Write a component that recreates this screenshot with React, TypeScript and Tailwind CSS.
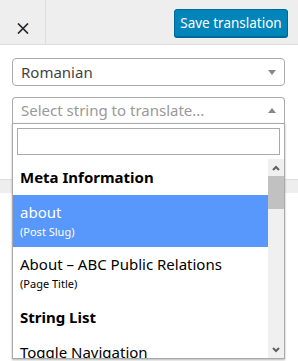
import { useState } from "react";

type Option = { label: string; hint?: string };
type Group = { title: string; options: Option[] };

const groups: Group[] = [
  {
    title: "Meta Information",
    options: [
      { label: "about", hint: "(Post Slug)" },
      { label: "About – ABC Public Relations", hint: "(Page Title)" },
    ],
  },
  {
    title: "String List",
    options: [{ label: "Toggle Navigation" }],
  },
];

function Triangle({ up }: { up?: boolean }) {
  return (
    <svg width="8" height="5" viewBox="0 0 8 5" className="text-[#888]">
      <path d={up ? "M0 5 L4 0 L8 5 Z" : "M0 0 L8 0 L4 5 Z"} fill="currentColor" />
    </svg>
  );
}

function Chevron({ up }: { up?: boolean }) {
  return (
    <svg width="8" height="6" viewBox="0 0 8 6" className="text-[#606060]">
      <path
        d={up ? "M1 5 L4 2 L7 5" : "M1 1 L4 4 L7 1"}
        fill="none"
        stroke="currentColor"
        strokeWidth="2"
      />
    </svg>
  );
}

export default function App() {
  const [selected] = useState("about");

  return (
    <div
      className="relative h-[361px] w-[298px] overflow-hidden bg-white text-[#32373c]"
      style={{ fontFamily: '"Noto Sans", "Open Sans", sans-serif' }}
    >
      {/* Header */}
      <div className="flex h-[45px] items-start border-b border-[#dddddd] bg-[#eeeeee]">
        <button className="flex h-[44px] w-[46px] items-end justify-center border-r border-[#dddddd] pb-[10px]">
          <svg width="12" height="11" viewBox="0 0 12 11">
            <path d="M1 0.5 L11 10.5 M11 0.5 L1 10.5" stroke="#23282d" strokeWidth="1.7" />
          </svg>
        </button>
        <div className="flex-1" />
        <button className="mr-[10px] mt-[9px] h-[28px] w-[114px] rounded-[3px] border border-[#006799] bg-[#0085ba] text-[13.5px] text-white shadow-[0_1px_0_#006799]">
          Save translation
        </button>
      </div>

      {/* Selects */}
      <div className="flex flex-col gap-[11px] px-[12px] pt-[13px] pr-[13px]">
        <div className="flex h-[28px] items-center justify-between rounded-[4px] border border-[#aaaaaa] pl-[8px] pr-[8px] text-[15px] text-[#444]">
          <span>Romanian</span>
          <Triangle />
        </div>
        <div className="flex h-[26px] items-center justify-between rounded-t-[4px] border border-b-0 border-[#aaaaaa] pl-[8px] pr-[8px] text-[15px] text-[#999]">
          <span>Select string to translate...</span>
          <Triangle up />
        </div>
      </div>

      {/* Background tab strip */}
      <div className="mt-[56px] h-[14px] border-t border-[#dddddd] bg-[#eeeeee]" />

      {/* Dropdown */}
      <div className="absolute left-[12px] top-[123px] flex h-[236px] w-[273px] flex-col border border-[#aaaaaa] bg-white shadow-[0_1px_2px_rgba(0,0,0,0.3)]">
        <div className="px-[4px] pb-[4px] pt-[4px]">
          <div className="h-[27px] w-full border border-[#aaaaaa]" />
        </div>
        <div className="flex min-h-0 flex-1">
          <ul className="flex-1 overflow-hidden">
            {groups.map((g) => (
              <li key={g.title}>
                <div className="px-[7px] py-[6px] text-[15px] font-bold leading-[24px] text-black">
                  {g.title}
                </div>
                {g.options.map((o) => {
                  const active = o.label === selected;
                  return (
                    <div
                      key={o.label}
                      className={
                        active
                          ? "bg-[#5897fb] px-[7px] py-[6px] text-white"
                          : "px-[7px] py-[6px] text-black"
                      }
                    >
                      <div className="text-[15px] leading-[22px]">{o.label}</div>
                      {o.hint && <div className="text-[11px] leading-[18px]">{o.hint}</div>}
                    </div>
                  );
                })}
              </li>
            ))}
          </ul>
          <div className="flex w-[16px] flex-col bg-[#f0f0f0]">
            <div className="flex h-[17px] items-center justify-center">
              <Chevron up />
            </div>
            <div className="h-[33px] bg-[#c1c1c1]" />
            <div className="flex-1" />
            <div className="flex h-[17px] items-center justify-center">
              <Chevron />
            </div>
          </div>
        </div>
      </div>
    </div>
  );
}
